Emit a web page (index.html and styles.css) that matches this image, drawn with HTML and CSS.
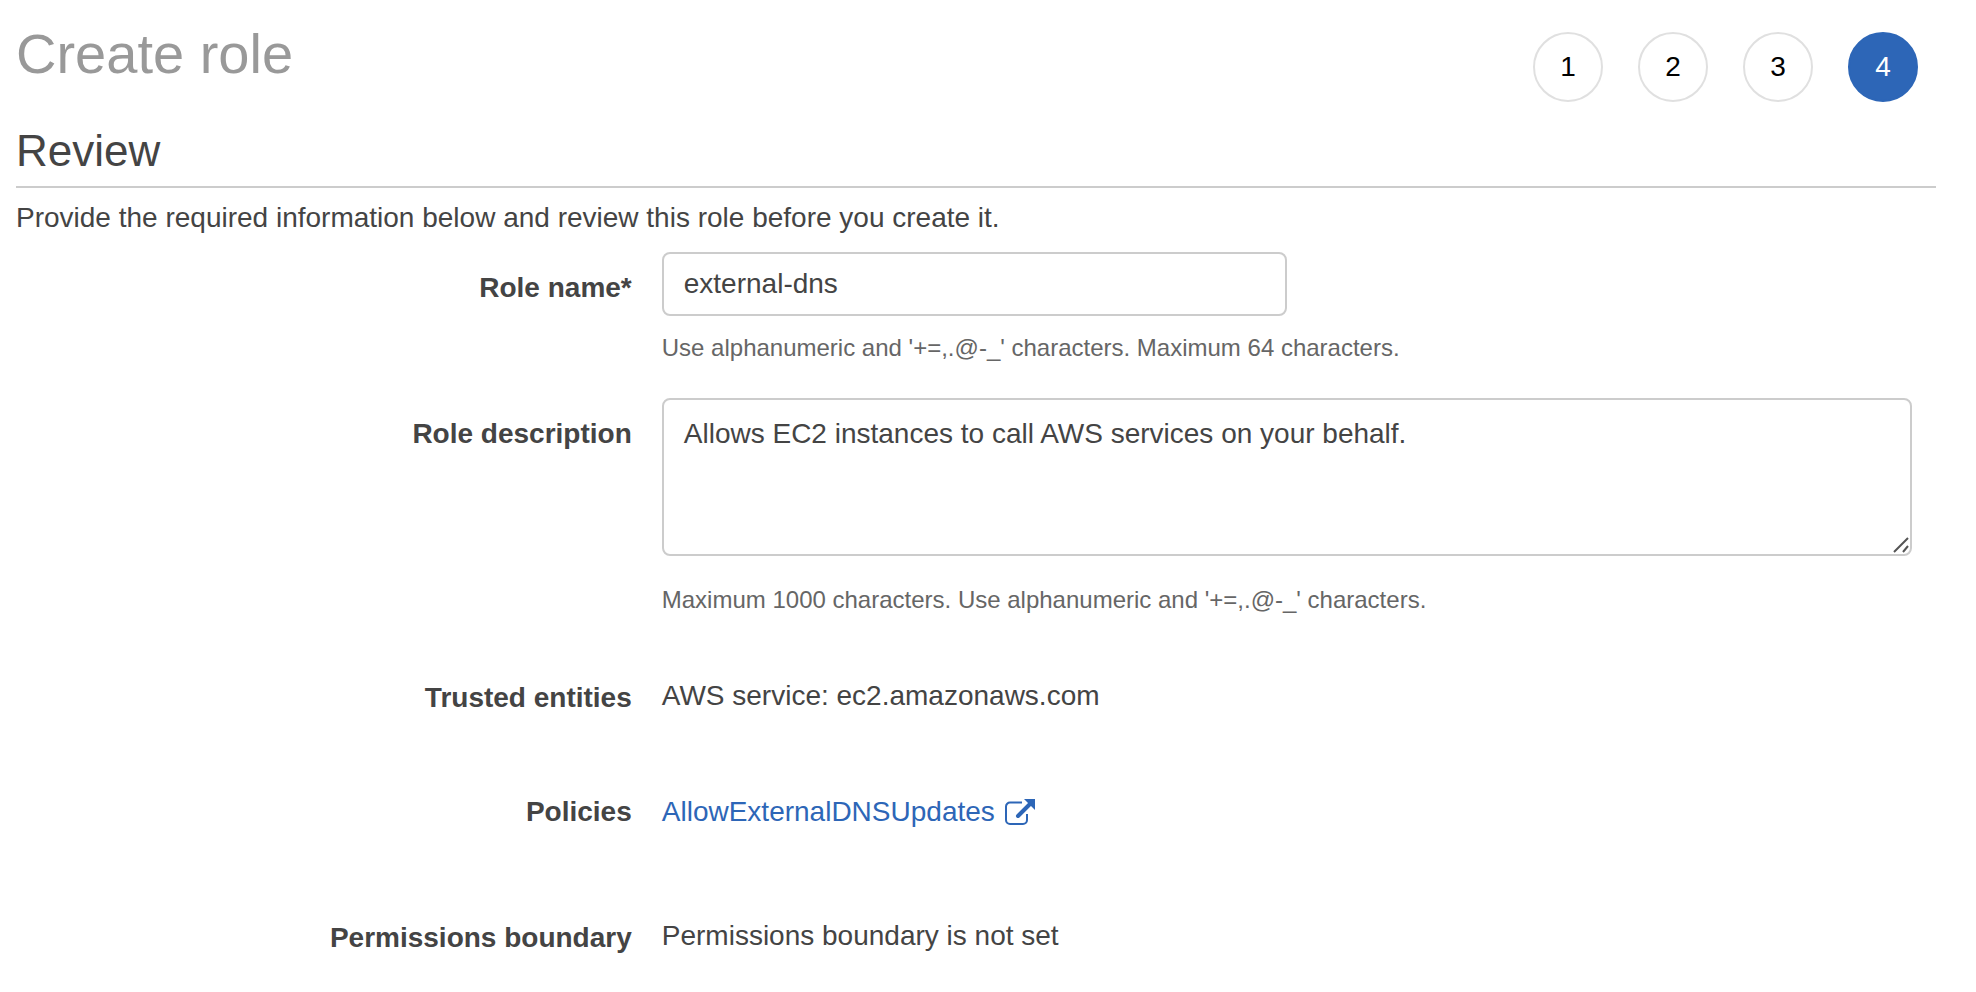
FILE: index.html
```
<!DOCTYPE html>
<html lang="en">
<head>
<meta charset="utf-8">
<meta name="viewport" content="width=device-width, initial-scale=1">
<title>Create role</title>
<link rel="stylesheet" href="styles.css">
</head>
<body>
<main class="page">
  <header class="page-header">
    <h1 class="page-title">Create role</h1>
    <nav aria-label="Steps">
      <ol class="steps">
        <li><button class="step" type="button">1</button></li>
        <li><button class="step" type="button">2</button></li>
        <li><button class="step" type="button">3</button></li>
        <li><button class="step step-current" type="button" aria-current="step">4</button></li>
      </ol>
    </nav>
  </header>

  <h2 class="section-title">Review</h2>
  <p class="intro">Provide the required information below and review this role before you create it.</p>

  <form class="form">
    <div class="row">
      <label class="label label-control" for="role-name">Role name*</label>
      <div class="field">
        <input class="control control-name" id="role-name" type="text" value="external-dns" aria-describedby="name-help">
        <p class="help" id="name-help">Use alphanumeric and '+=,.@-_' characters. Maximum 64 characters.</p>
      </div>
    </div>
    <div class="row row-description">
      <label class="label label-control" for="role-description">Role description</label>
      <div class="field">
        <div class="area">
          <textarea class="control control-area" id="role-description" rows="3" aria-describedby="description-help">Allows EC2 instances to call AWS services on your behalf.</textarea>
          <svg class="grip" viewBox="0 0 16 16" aria-hidden="true"><path d="M1 15 15 1M10 15 15 9"/></svg>
        </div>
        <p class="help help-area" id="description-help">Maximum 1000 characters. Use alphanumeric and '+=,.@-_' characters.</p>
      </div>
    </div>
    <div class="row row-value">
      <div class="label label-value">Trusted entities</div>
      <div class="field">AWS service: ec2.amazonaws.com</div>
    </div>
    <div class="row row-policies">
      <div class="label">Policies</div>
      <div class="field">
        <a class="link" href="#">AllowExternalDNSUpdates
          <svg class="external" viewBox="0 0 30 26" aria-hidden="true"><path class="frame" d="M17 3.500H5a4 4 0 0 0-4 4V21a4 4 0 0 0 4 4h13a4 4 0 0 0 4-4v-6"/><path class="shaft" d="M13 17 25 5"/><path class="head" d="M19 0h11v11z"/></svg>
        </a>
      </div>
    </div>
    <div class="row">
      <div class="label label-value">Permissions boundary</div>
      <div class="field">Permissions boundary is not set</div>
    </div>
  </form>
</main>
</body>
</html>
```
FILE: styles.css
```
* {
  box-sizing: border-box;
}

body {
  margin: 0;
  background: #fff;
  color: #444;
  font-family: "Liberation Sans", Arial, sans-serif;
  font-size: 28px;
  line-height: 36px;
}

.page {
  padding: 22px 40px 32px 16px;
}

.page-header {
  display: flex;
  justify-content: space-between;
  align-items: flex-start;
}

.page-title {
  margin: 0;
  color: #999;
  font-size: 56px;
  font-weight: 400;
  line-height: 64px;
}

.steps {
  display: flex;
  gap: 35px;
  margin: 0;
  padding: 10px 18px 0 0;
  list-style: none;
}

.step {
  display: block;
  width: 70px;
  height: 70px;
  padding: 0;
  border: 2px solid #e0e0e0;
  border-radius: 50%;
  background: #fff;
  color: #000;
  font: inherit;
}

.step-current {
  border-color: #2d66b7;
  background: #2d66b7;
  color: #fff;
}

.section-title {
  margin: 23px 0 12px;
  padding-bottom: 9px;
  border-bottom: 2px solid #ccc;
  font-size: 44px;
  font-weight: 400;
  line-height: 52px;
}

.intro {
  margin: 0 0 16px;
}

.form {
  padding-right: 24px;
}

.row {
  display: grid;
  grid-template-columns: 33fr 67fr;
  column-gap: 30px;
}

.row-description {
  margin: 34px 0 62px;
}

.row-policies {
  margin: 78px 0 88px;
}

.label {
  font-weight: 700;
  text-align: right;
}

.label-control {
  padding-top: 18px;
}

.label-value {
  padding-top: 2px;
}

.field {
  min-width: 0;
}

.control {
  display: block;
  width: 100%;
  border: 2px solid #ccc;
  border-radius: 8px;
  background: #fff;
  color: #444;
  font: inherit;
}

.control-name {
  width: 50%;
  height: 64px;
  padding: 0 20px;
}

.area {
  position: relative;
}

.control-area {
  height: 158px;
  padding: 16px 20px;
  resize: none;
}

.grip {
  position: absolute;
  right: 3px;
  bottom: 3px;
  width: 16px;
  height: 16px;
  fill: none;
  stroke: #555;
  stroke-width: 2;
  pointer-events: none;
}

.help {
  margin: 16px 0 0;
  color: #666;
  font-size: 24px;
  line-height: 32px;
}

.help-area {
  margin-top: 28px;
}

.link {
  display: inline-flex;
  align-items: center;
  gap: 10px;
  color: #2d66b7;
  text-decoration: none;
}

.external {
  width: 30px;
  height: 26px;
}

.frame,
.shaft {
  fill: none;
  stroke: currentColor;
}

.frame {
  stroke-width: 2;
}

.shaft {
  stroke-width: 4;
  stroke-linecap: round;
}

.head {
  fill: currentColor;
}
```
